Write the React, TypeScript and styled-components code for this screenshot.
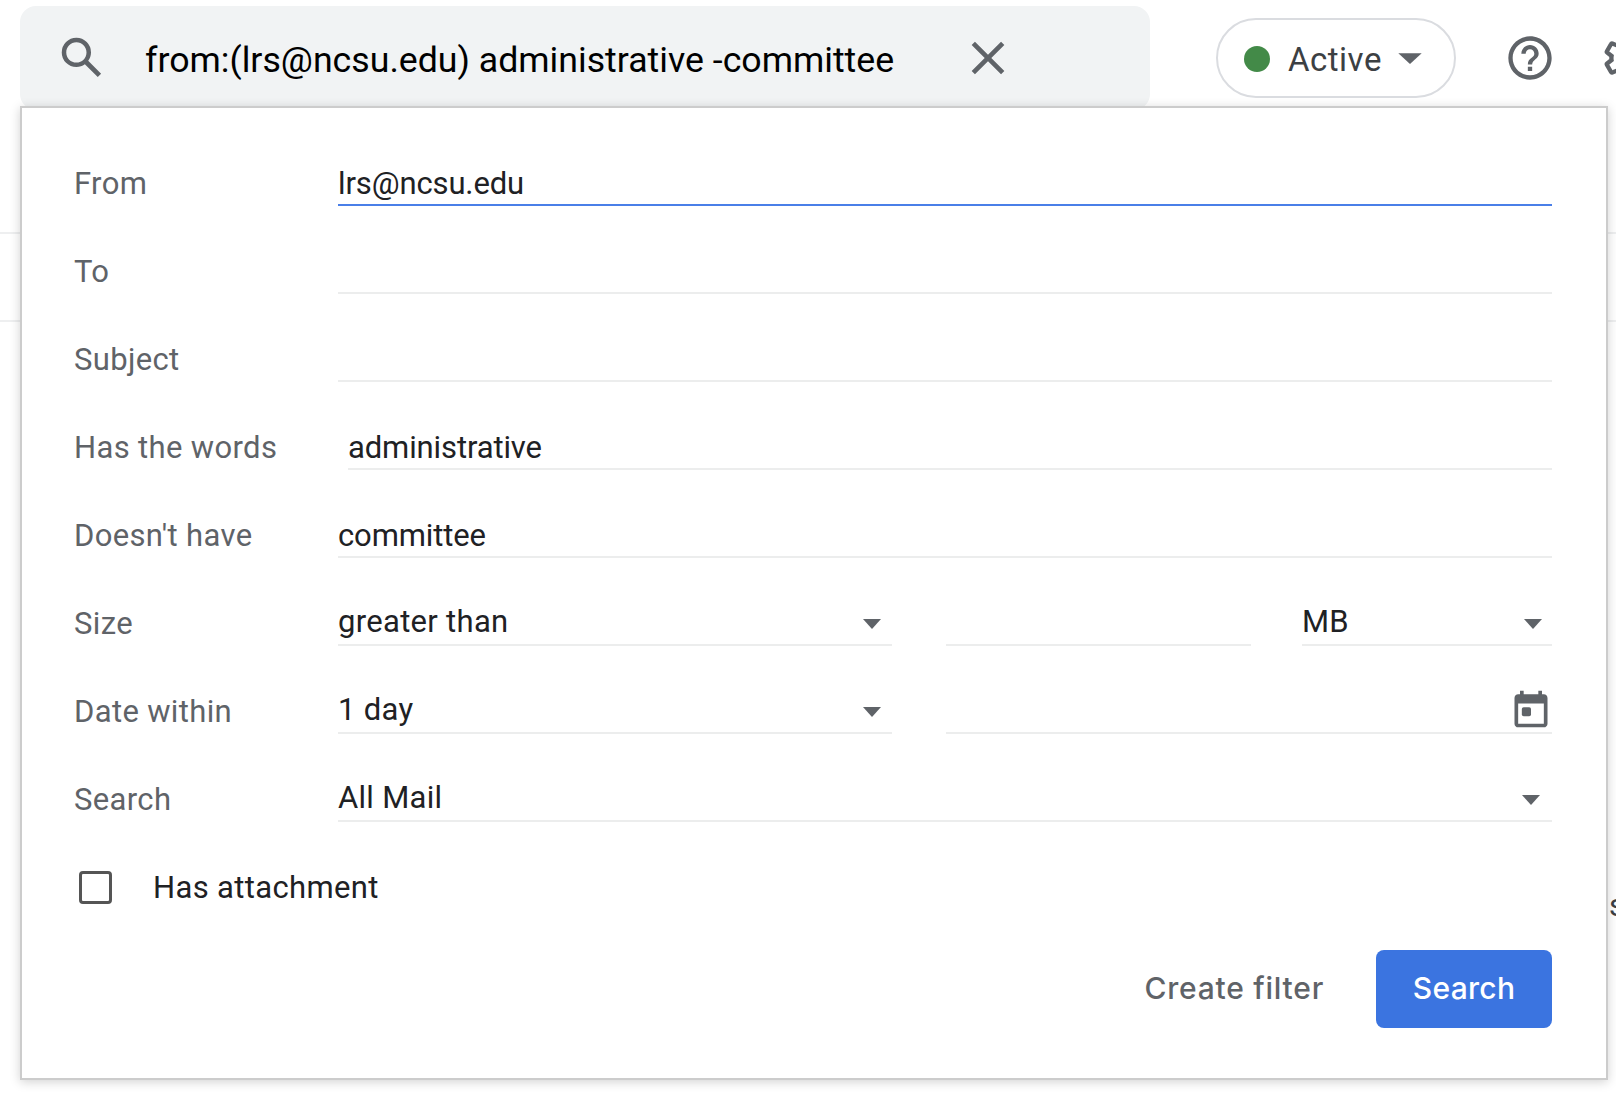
import React from "react";
import styled, { createGlobalStyle } from "styled-components";

const GlobalStyle = createGlobalStyle`
  html, body {
    margin: 0;
    padding: 0;
    background: #fff;
    overflow: hidden;
  }
  * { box-sizing: border-box; }
`;

const Page = styled.div`
  position: relative;
  width: 1616px;
  height: 1096px;
  overflow: hidden;
  font-family: Roboto, "Liberation Sans", sans-serif;
`;

const TopBar = styled.div`
  display: flex;
  align-items: flex-start;
  padding: 6px 0 0 20px;
  height: 234px;
  border-bottom: 2px solid #eeeff0;
`;

const ToolStrip = styled.div`
  height: 88px;
  border-bottom: 2px solid #eeeff0;
`;

const SearchBar = styled.div`
  width: 1130px;
  height: 104px;
  flex: none;
  display: flex;
  align-items: center;
  padding-left: 35px;
  background: #f1f3f4;
  border-radius: 16px;
`;

const QueryText = styled.span`
  margin-left: 36px;
  padding-top: 4px;
  width: 815px;
  font-size: 35.7px;
  line-height: 44px;
  color: #000;
  white-space: nowrap;
`;

const StatusPill = styled.div`
  margin: 12px 0 0 66px;
  width: 240px;
  height: 80px;
  flex: none;
  display: flex;
  align-items: center;
  padding: 2px 0 0 26px;
  border: 2px solid #dadce0;
  border-radius: 40px;
  color: #3c4043;
  font-size: 33px;
  letter-spacing: 0.5px;
`;

const StatusDot = styled.span`
  width: 26px;
  height: 26px;
  border-radius: 50%;
  background: #438a48;
  margin-right: 18px;
`;

const StatusCaret = styled.svg`
  margin-left: 8px;
`;

const HeaderIcons = styled.div`
  margin: 26px 0 0 48px;
  display: flex;
  gap: 45px;
  flex: none;
`;

const Panel = styled.div`
  position: absolute;
  left: 20px;
  top: 106px;
  width: 1588px;
  height: 974px;
  padding: 44px 54px 0 52px;
  background: #fff;
  border: 2px solid #ccc;
  box-shadow: 0 2px 10px rgba(0, 0, 0, 0.18);
`;

const Row = styled.div`
  display: flex;
  height: 88px;
`;

const Label = styled.div`
  width: 264px;
  flex: none;
  padding-top: 12px;
  font-size: 31px;
  line-height: 40px;
  letter-spacing: 0.35px;
  color: #5f6368;
`;

const Field = styled.div<{ $active?: boolean; $inset?: number; $width?: number; $select?: boolean }>`
  position: relative;
  flex: ${(p) => (p.$width ? "none" : "1")};
  width: ${(p) => (p.$width ? `${p.$width}px` : "auto")};
  margin-left: ${(p) => p.$inset ?? 0}px;
  height: 54px;
  padding-top: ${(p) => (p.$select ? 10 : 12)}px;
  font-size: 31px;
  line-height: 40px;
  letter-spacing: ${(p) => (p.$select ? 0.3 : -0.12)}px;
  color: #202124;
  border-bottom: 2px solid ${(p) => (p.$active ? "#4a7fe8" : "#eceded")};
`;

const Caret = styled.span<{ $right?: number }>`
  position: absolute;
  right: ${(p) => p.$right ?? 12}px;
  top: 27px;
  width: 0;
  height: 0;
  border-left: 9px solid transparent;
  border-right: 9px solid transparent;
  border-top: 10px solid #5f6368;
`;

const CalendarIcon = styled.svg`
  position: absolute;
  right: -1px;
  top: 7px;
`;

const CheckRow = styled.div`
  display: flex;
  align-items: center;
  height: 50px;
  margin-top: 6px;
  padding-left: 5px;
  font-size: 31px;
  letter-spacing: 0.35px;
  color: #202124;
`;

const CheckBox = styled.span`
  width: 33px;
  height: 33px;
  border: 3px solid #555;
  border-radius: 4px;
  margin-right: 41px;
`;

const Actions = styled.div`
  display: flex;
  justify-content: flex-end;
  align-items: center;
  margin-top: 38px;
`;

const LinkButton = styled.button`
  border: 0;
  background: none;
  padding: 0 0 2px;
  margin-right: 52px;
  font-family: Inter, Roboto, sans-serif;
  font-size: 30px;
  font-weight: 500;
  letter-spacing: 0.75px;
  color: #5f6368;
`;

const PrimaryButton = styled.button`
  width: 176px;
  height: 78px;
  border: 0;
  border-radius: 8px;
  background: #3b74e0;
  color: #fff;
  padding: 0 0 2px;
  font-family: Inter, Roboto, sans-serif;
  font-size: 30px;
  font-weight: 500;
  letter-spacing: 0.3px;
`;

const SideLetter = styled.span`
  position: absolute;
  left: 1609px;
  top: 888px;
  font-size: 31px;
  line-height: 36px;
  color: #3c4043;
`;

const App: React.FC = () => {
  return (
    <Page>
      <GlobalStyle />
      <TopBar>
        <SearchBar>
          <svg width="54" height="54" viewBox="0 0 24 24" fill="#5f6368">
            <path d="M20.49 19l-5.73-5.73C15.53 12.2 16 10.91 16 9.5A6.5 6.5 0 1 0 9.5 16c1.41 0 2.7-.47 3.77-1.24L19 20.49 20.49 19zM5 9.5C5 7.01 7.01 5 9.5 5S14 7.01 14 9.5 11.99 14 9.5 14 5 11.99 5 9.5z" />
          </svg>
          <QueryText>from:(lrs@ncsu.edu) administrative -committee</QueryText>
          <svg width="56" height="56" viewBox="0 0 24 24" fill="#5f6368">
            <path d="M19 6.41L17.59 5 12 10.59 6.41 5 5 6.41 10.59 12 5 17.59 6.41 19 12 13.41 17.59 19 19 17.59 13.41 12z" />
          </svg>
        </SearchBar>
        <StatusPill>
          <StatusDot />
          Active
          <StatusCaret width="40" height="40" viewBox="0 0 24 24" fill="#5f6368">
            <path d="M5 8.5h14L12 15z" />
          </StatusCaret>
        </StatusPill>
        <HeaderIcons>
          <svg width="52" height="52" viewBox="0 0 24 24" fill="#5f6368">
            <path d="M11 18h2v-2h-2v2zm1-16C6.48 2 2 6.48 2 12s4.48 10 10 10 10-4.48 10-10S17.52 2 12 2zm0 18c-4.41 0-8-3.59-8-8s3.59-8 8-8 8 3.59 8 8-3.59 8-8 8zm0-14c-2.21 0-4 1.79-4 4h2c0-1.1.9-2 2-2s2 .9 2 2c0 2-3 1.75-3 5h2c0-2.25 3-2.5 3-5 0-2.21-1.79-4-4-4z" />
          </svg>
          <svg width="52" height="52" viewBox="0 0 24 24" fill="none" stroke="#5f6368" strokeWidth="2">
            <path d="M19.14 12.94c.04-.3.06-.61.06-.94 0-.32-.02-.64-.07-.94l2.03-1.58c.18-.14.23-.41.12-.61l-1.92-3.32c-.12-.22-.37-.29-.59-.22l-2.39.96c-.5-.38-1.03-.7-1.62-.94l-.36-2.54c-.04-.24-.24-.41-.48-.41h-3.84c-.24 0-.43.17-.47.41l-.36 2.54c-.59.24-1.13.57-1.62.94l-2.39-.96c-.22-.08-.47 0-.59.22L2.74 8.87c-.12.21-.08.47.12.61l2.03 1.58c-.05.3-.09.63-.09.94s.02.64.07.94l-2.03 1.58c-.18.14-.23.41-.12.61l1.92 3.32c.12.22.37.29.59.22l2.39-.96c.5.38 1.03.7 1.62.94l.36 2.54c.05.24.24.41.48.41h3.84c.24 0 .44-.17.47-.41l.36-2.54c.59-.24 1.13-.56 1.62-.94l2.39.96c.22.08.47 0 .59-.22l1.92-3.32c.12-.22.07-.47-.12-.61l-2.01-1.58z" />
          </svg>
        </HeaderIcons>
      </TopBar>
      <ToolStrip />
      <SideLetter>s</SideLetter>
      <Panel>
        <Row>
          <Label>From</Label>
          <Field $active>lrs@ncsu.edu</Field>
        </Row>
        <Row>
          <Label>To</Label>
          <Field />
        </Row>
        <Row>
          <Label>Subject</Label>
          <Field />
        </Row>
        <Row>
          <Label>Has the words</Label>
          <Field $inset={10}>administrative</Field>
        </Row>
        <Row>
          <Label>Doesn't have</Label>
          <Field>committee</Field>
        </Row>
        <Row>
          <Label>Size</Label>
          <Field $select $width={554}>
            greater than
            <Caret $right={11} />
          </Field>
          <Field $inset={54} $width={305} />
          <Field $select $inset={51}>
            MB
            <Caret $right={10} />
          </Field>
        </Row>
        <Row>
          <Label>Date within</Label>
          <Field $select $width={554}>
            1 day
            <Caret $right={11} />
          </Field>
          <Field $inset={54}>
            <CalendarIcon width="44" height="44" viewBox="0 0 24 24" fill="#5f6368">
              <path d="M19 4h-1V2h-2v2H8V2H6v2H5c-1.1 0-2 .9-2 2v14c0 1.1.9 2 2 2h14c1.1 0 2-.9 2-2V6c0-1.1-.9-2-2-2zm0 16H5V9h14v11z" />
              <rect x="7" y="11" width="5" height="5" rx="1" />
            </CalendarIcon>
          </Field>
        </Row>
        <Row>
          <Label>Search</Label>
          <Field $select>
            All Mail
            <Caret $right={12} />
          </Field>
        </Row>
        <CheckRow>
          <CheckBox />
          Has attachment
        </CheckRow>
        <Actions>
          <LinkButton>Create filter</LinkButton>
          <PrimaryButton>Search</PrimaryButton>
        </Actions>
      </Panel>
    </Page>
  );
};

export default App;
